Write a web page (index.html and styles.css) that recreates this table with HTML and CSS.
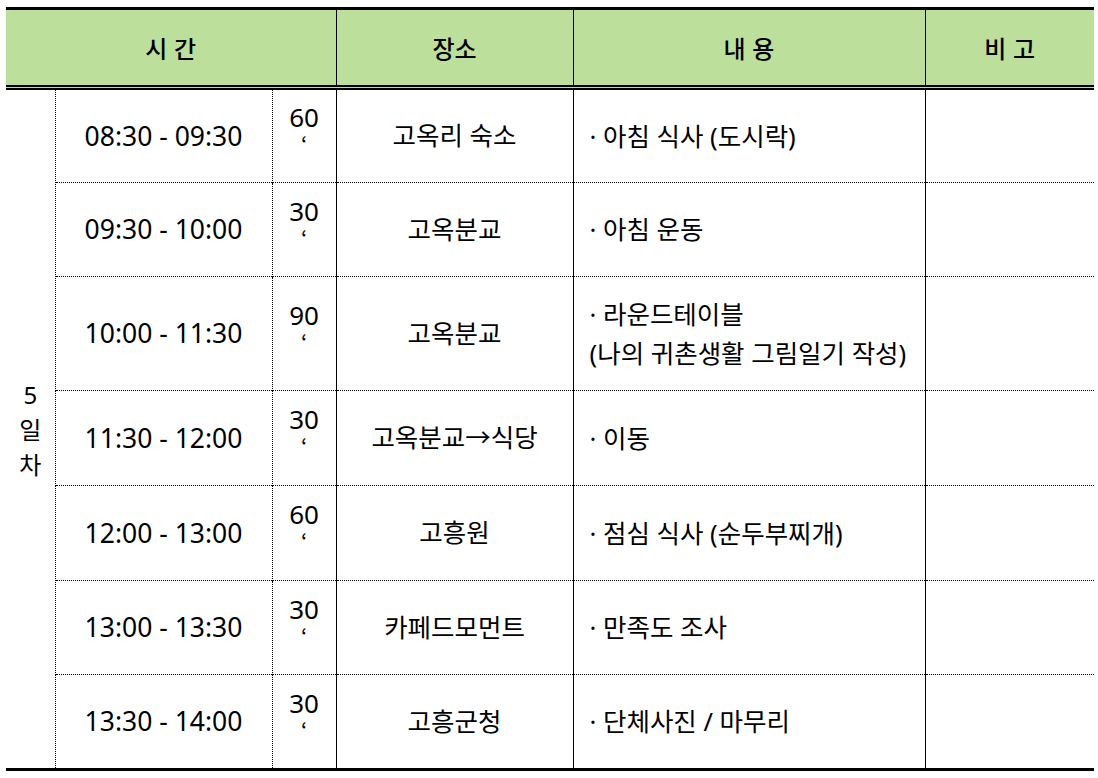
FILE: index.html
```html
<!DOCTYPE html>
<html lang="ko">
<head>
<meta charset="utf-8">
<link rel="stylesheet" href="styles.css">
</head>
<body>
<table class="sched">
  <colgroup>
    <col class="c-day"><col class="c-time"><col class="c-dur"><col class="c-place"><col class="c-content"><col class="c-note">
  </colgroup>
  <thead>
    <tr class="head">
      <th colspan="3">시 간</th>
      <th>장소</th>
      <th>내 용</th>
      <th>비 고</th>
    </tr>
  </thead>
  <tbody>
    <tr class="r95">
      <td class="day" rowspan="7"><span>5</span><span>일</span><span>차</span></td>
      <td class="time">08:30 - 09:30</td>
      <td class="dur"><span class="n">60</span><span class="q">‘</span></td>
      <td class="place">고옥리 숙소</td>
      <td class="content">· 아침 식사 (도시락)</td>
      <td class="note"></td>
    </tr>
    <tr class="r94">
      <td class="time">09:30 - 10:00</td>
      <td class="dur"><span class="n">30</span><span class="q">‘</span></td>
      <td class="place">고옥분교</td>
      <td class="content">· 아침 운동</td>
      <td class="note"></td>
    </tr>
    <tr class="r114">
      <td class="time">10:00 - 11:30</td>
      <td class="dur"><span class="n">90</span><span class="q">‘</span></td>
      <td class="place">고옥분교</td>
      <td class="content"><span class="ln">· 라운드테이블</span><span class="ln">(나의 귀촌생활 그림일기 작성)</span></td>
      <td class="note"></td>
    </tr>
    <tr class="r95">
      <td class="time">11:30 - 12:00</td>
      <td class="dur"><span class="n">30</span><span class="q">‘</span></td>
      <td class="place">고옥분교→식당</td>
      <td class="content">· 이동</td>
      <td class="note"></td>
    </tr>
    <tr class="r95">
      <td class="time">12:00 - 13:00</td>
      <td class="dur"><span class="n">60</span><span class="q">‘</span></td>
      <td class="place">고흥원</td>
      <td class="content">· 점심 식사 (순두부찌개)</td>
      <td class="note"></td>
    </tr>
    <tr class="r94">
      <td class="time">13:00 - 13:30</td>
      <td class="dur"><span class="n">30</span><span class="q">‘</span></td>
      <td class="place">카페드모먼트</td>
      <td class="content">· 만족도 조사</td>
      <td class="note"></td>
    </tr>
    <tr class="r95 last">
      <td class="time">13:30 - 14:00</td>
      <td class="dur"><span class="n">30</span><span class="q">‘</span></td>
      <td class="place">고흥군청</td>
      <td class="content">· 단체사진 / 마무리</td>
      <td class="note"></td>
    </tr>
  </tbody>
</table>
</body>
</html>
```
FILE: styles.css
```css
html, body {
  margin: 0;
  padding: 0;
  background: #fff;
}
body {
  padding: 7px 4px 0 6px;
  font-family: "Noto Sans", "Noto Sans CJK KR", sans-serif;
  color: #000;
  font-size: 25.5px;
}
.sched {
  border-collapse: collapse;
  table-layout: fixed;
  width: 1088px;
  border-top: 3px solid #000;
  border-bottom: 3px solid #000;
}
.c-day { width: 49px; }
.c-time { width: 217px; }
.c-dur { width: 64px; }
.c-place { width: 237px; }
.c-content { width: 352px; }
.c-note { width: 169px; }

.head th {
  background: #bcdf9b;
  height: 75px;
  padding: 0;
  font-weight: 500;
  font-size: 24px;
  font-family: "Noto Sans CJK KR", sans-serif;
  border-bottom: 5px double #000;
  border-left: 1px solid #000;
  text-align: center;
  vertical-align: middle;
}
.head th:first-child { border-left: none; }

td {
  padding: 0;
  vertical-align: middle;
  text-align: center;
  border-top: 1px dotted #000;
  line-height: 1.3;
}
tbody tr:first-child td { border-top: none; }
.r95 { height: 95px; }
.r94 { height: 94px; }
.r114 { height: 114px; }

.day {
  border-right: 1px dotted #000;
  line-height: 35px;
  font-size: 24px;
}
.day span { display: block; }
.time {
  border-right: 1px dotted #000;
  font-size: 26.5px;
}
.dur {
  border-right: 1px solid #000;
  padding-bottom: 16px;
}
.dur span { display: block; }
.dur .n {
  font-size: 26px;
  line-height: 30px;
}
.dur .q {
  font-family: "Noto Sans CJK KR", sans-serif;
  font-size: 22px;
  line-height: 22px;
  height: 22px;
}
.place { border-right: 1px solid #000; }
.content {
  text-align: left;
  padding-left: 16px;
  border-right: 1px solid #000;
  line-height: 39px;
}
.content .ln { display: block; }
```
